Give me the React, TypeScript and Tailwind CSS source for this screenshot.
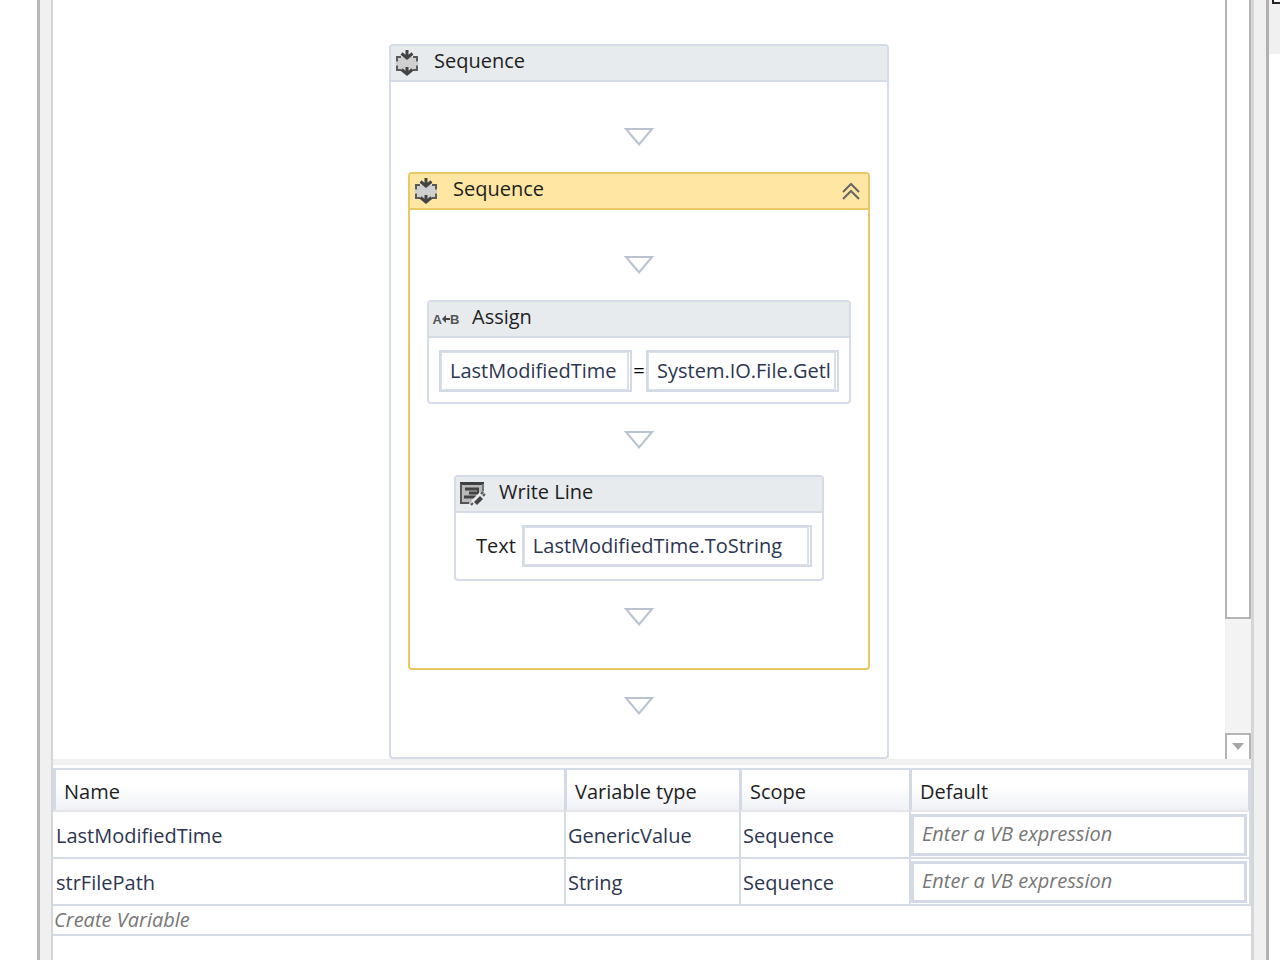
import React, { useState } from 'react';

interface Variable {
  name: string;
  type: string;
  scope: string;
}

const VARIABLES: Variable[] = [
  { name: 'LastModifiedTime', type: 'GenericValue', scope: 'Sequence' },
  { name: 'strFilePath', type: 'String', scope: 'Sequence' },
];

function SequenceIcon() {
  return (
    <svg width="26" height="28" viewBox="0 0 26 28" fill="none" className="shrink-0">
      <path d="M2 8H22V12L24 14.500L22 17V21H2V17L0 14.500L2 12Z" fill="#cfcfcf" />
      <path d="M6 8H2V12.500M18 8H22V12.500M2 16.500V21H6M22 16.500V21H18" stroke="#5a5a5a" strokeWidth="2" />
      <path d="M12 1V9M6.500 4.500L12 9L17.500 4.500" stroke="#444" strokeWidth="3" />
      <path d="M12 18V24M6.500 20.500L12 25L17.500 20.500" stroke="#444" strokeWidth="3" />
    </svg>
  );
}

function AssignIcon() {
  return (
    <span className="flex w-[26px] shrink-0 items-center justify-center font-['Liberation_Sans'] text-[13px] font-bold leading-none text-[#555]">
      A
      <svg width="8" height="8" viewBox="0 0 8 8" className="shrink-0">
        <path d="M0 4L4 0V3H8V5H4V8Z" fill="#444" />
      </svg>
      B
    </span>
  );
}

function WriteLineIcon() {
  return (
    <svg width="26" height="26" viewBox="0 0 26 26" fill="none" className="shrink-0">
      <path d="M0 1H24V14L18 23H0Z" fill="#b9b9b9" />
      <path d="M0 2.500H24" stroke="#3f3f3f" strokeWidth="3" />
      <path d="M1 3V22H9" stroke="#555" strokeWidth="2" />
      <path d="M23 3V10" stroke="#777" strokeWidth="2" />
      <path d="M5 8H19M9 12H18M4 16H16" stroke="#444" strokeWidth="3" />
      <path d="M18 8V15" stroke="#444" strokeWidth="2" />
      <path d="M10 25L12 19L20 11L26 17L17 25Z" fill="#e8ebee" />
      <path d="M14 21L20 15L23 18L17 24Z" fill="#444" />
      <path d="M21 13L23 11M23 15L25 13M11 24L13 22" stroke="#555" strokeWidth="2" />
    </svg>
  );
}

/** Drop target between two activities */
function Connector() {
  return (
    <div className="flex h-[71px] items-center justify-center">
      <svg width="30" height="20" viewBox="0 0 30 20" fill="none">
        <path d="M2 2H28L15 17.500Z" fill="#fff" stroke="#b8c2d0" strokeWidth="2" />
      </svg>
    </div>
  );
}

interface ActivityProps {
  title: string;
  icon: React.ReactNode;
  selected?: boolean;
  onToggle?: () => void;
  className?: string;
  children?: React.ReactNode;
}

function Activity({ title, icon, selected, onToggle, className = '', children }: ActivityProps) {
  return (
    <section className={`rounded-[4px] border-2 bg-white ${selected ? 'border-[#e8c765]' : 'border-[#d5dce8]'} ${className}`}>
      <header
        className={`flex h-9 items-center gap-[13px] border-b-2 pl-1 pr-2 ${
          selected ? 'border-[#e8c765] bg-[#ffe6a2]' : 'border-[#d5dce8] bg-[#e7ebee]'
        }`}
      >
        {icon}
        <h2 className="flex-1 pb-1 text-[20px] leading-7 text-[#1e1e1e]">{title}</h2>
        {onToggle && (
          <button type="button" onClick={onToggle} aria-label="Collapse">
            <svg width="18" height="20" viewBox="0 0 18 20" fill="none" stroke="#666" strokeWidth="2">
              <path d="M1 11L9 3L17 11M1 18L9 10L17 18" />
            </svg>
          </button>
        )}
      </header>
      {children}
    </section>
  );
}

interface ExpressionBoxProps {
  label: string;
  value?: string;
  id?: string;
  /** Table cells use one solid frame, activities a double right edge */
  solid?: boolean;
}

function ExpressionBox({ label, value, id, solid }: ExpressionBoxProps) {
  return (
    <div className={`min-w-0 flex-1 border-[#d3dae6] bg-white ${solid ? 'border-3' : 'border-2 pr-px'}`}>
      <div className={`border-[#d9e0ea] ${solid ? '' : 'border border-r-2'}`}>
        <input
          id={id}
          aria-label={id ? undefined : label}
          defaultValue={value}
          placeholder="Enter a VB expression"
          className="block h-9 w-full pb-[2px] pl-2 text-[20px] text-[#2d3650] outline-none placeholder:italic placeholder:text-[#777]"
        />
      </div>
    </div>
  );
}

function Designer() {
  const [open, setOpen] = useState(true);

  return (
    <div className="flex justify-center pt-11">
      <Activity title="Sequence" icon={<SequenceIcon />} className="w-[500px]">
        <div className="px-[17px] pb-4 pt-[19px]">
          <Connector />
          <Activity title="Sequence" icon={<SequenceIcon />} selected onToggle={() => setOpen(!open)}>
            {open && (
              <div className="px-[17px] pb-4 pt-[19px]">
                <Connector />
                <Activity title="Assign" icon={<AssignIcon />}>
                  <div className="flex items-center px-[10px] pb-[10px] pt-3">
                    <ExpressionBox label="To" value="LastModifiedTime" />
                    <span className="w-[14px] text-center text-[20px] leading-7 text-black">=</span>
                    <ExpressionBox label="Value" value="System.IO.File.Getl" />
                  </div>
                </Activity>
                <Connector />
                <Activity title="Write Line" icon={<WriteLineIcon />} className="mx-[27px]">
                  <div className="flex items-center gap-[6px] pb-3 pl-5 pr-[10px] pt-3">
                    <label htmlFor="write-text" className="text-[20px] leading-7 text-[#1e1e1e]">
                      Text
                    </label>
                    <ExpressionBox id="write-text" label="Text" value="LastModifiedTime.ToString" />
                  </div>
                </Activity>
                <Connector />
              </div>
            )}
          </Activity>
          <Connector />
        </div>
      </Activity>
    </div>
  );
}

function ScrollBar() {
  return (
    <div className="flex w-[26px] shrink-0 flex-col justify-between bg-[#f3f3f3]">
      <div className="h-[619px] border-2 border-t-0 border-[#b4b4b4] bg-white" />
      <button
        type="button"
        aria-label="Scroll down"
        className="flex h-[26px] items-center justify-center border-2 border-b-0 border-[#b4b4b4] bg-white"
      >
        <svg width="12" height="8" viewBox="0 0 12 8">
          <path d="M0 0H12L6 7Z" fill="#a6a6a6" />
        </svg>
      </button>
    </div>
  );
}

const HEADERS = ['Name', 'Variable type', 'Scope', 'Default'];

function VariablesTable() {
  return (
    <table className="w-full table-fixed border-separate border-spacing-0 text-left text-[20px] leading-7 text-[#2d3650]">
      <colgroup>
        <col className="w-[511px]" />
        <col className="w-[175px]" />
        <col className="w-[170px]" />
        <col />
      </colgroup>
      <thead>
        <tr className="h-11 bg-linear-to-b from-white from-40% to-[#eef0f6]">
          {HEADERS.map((h) => (
            <th
              key={h}
              className="border-b-2 border-l-3 border-t-2 border-b-[#e6e6ea] border-l-[#d3dae6] border-t-[#d5dce8] pl-2 pt-[3px] font-normal text-[#1e1e1e] last:border-r-3 last:border-r-[#d3dae6]"
            >
              {h}
            </th>
          ))}
        </tr>
      </thead>
      <tbody>
        {VARIABLES.map((v) => (
          <tr key={v.name} className="h-[47px]">
            <td className="border-b-2 border-[#d5dce8] pl-[3px] pt-[2px]">{v.name}</td>
            <td className="border-b-2 border-l-2 border-[#d5dce8] pl-[2px] pt-[2px]">{v.type}</td>
            <td className="border-b-2 border-l-2 border-[#d5dce8] pl-[2px] pt-[2px]">{v.scope}</td>
            <td className="border-b-2 border-l-2 border-r-2 border-[#d5dce8] pr-[2px]">
              <div className="flex">
                <ExpressionBox label={`Default for ${v.name}`} solid />
              </div>
            </td>
          </tr>
        ))}
        <tr className="h-[30px]">
          <td colSpan={4} className="border-b-2 border-[#d5dce8]">
            <button type="button" className="block pl-px italic text-[#777]">
              Create Variable
            </button>
          </td>
        </tr>
      </tbody>
    </table>
  );
}

export default function App() {
  return (
    <div className="flex min-h-screen bg-white font-['Open_Sans','Noto_Sans',sans-serif]">
      <div className="w-[37px] shrink-0" />
      <div className="w-4 shrink-0 border-l-3 border-r-2 border-l-[#b8b8b8] border-r-[#d4d6da] bg-[#f0f0f0]" />

      <main className="min-w-0 flex-1">
        <div className="flex">
          <div className="min-w-0 flex-1">
            <Designer />
          </div>
          <ScrollBar />
        </div>
        <div className="mb-[3px] h-[6px] bg-[#f0f0f0]" />
        <VariablesTable />
      </main>

      <div className="w-[18px] shrink-0 border-l-3 border-r-3 border-l-[#d4d6da] border-r-[#b0b0b0] bg-[#f0f0f0]" />
      <div className="w-[11px] shrink-0">
        <div className="h-[54px] bg-[#f0f0f0] pl-[3px]">
          <div className="h-1 border-b-2 border-l-2 border-[#2b2326] bg-white" />
        </div>
      </div>
    </div>
  );
}
